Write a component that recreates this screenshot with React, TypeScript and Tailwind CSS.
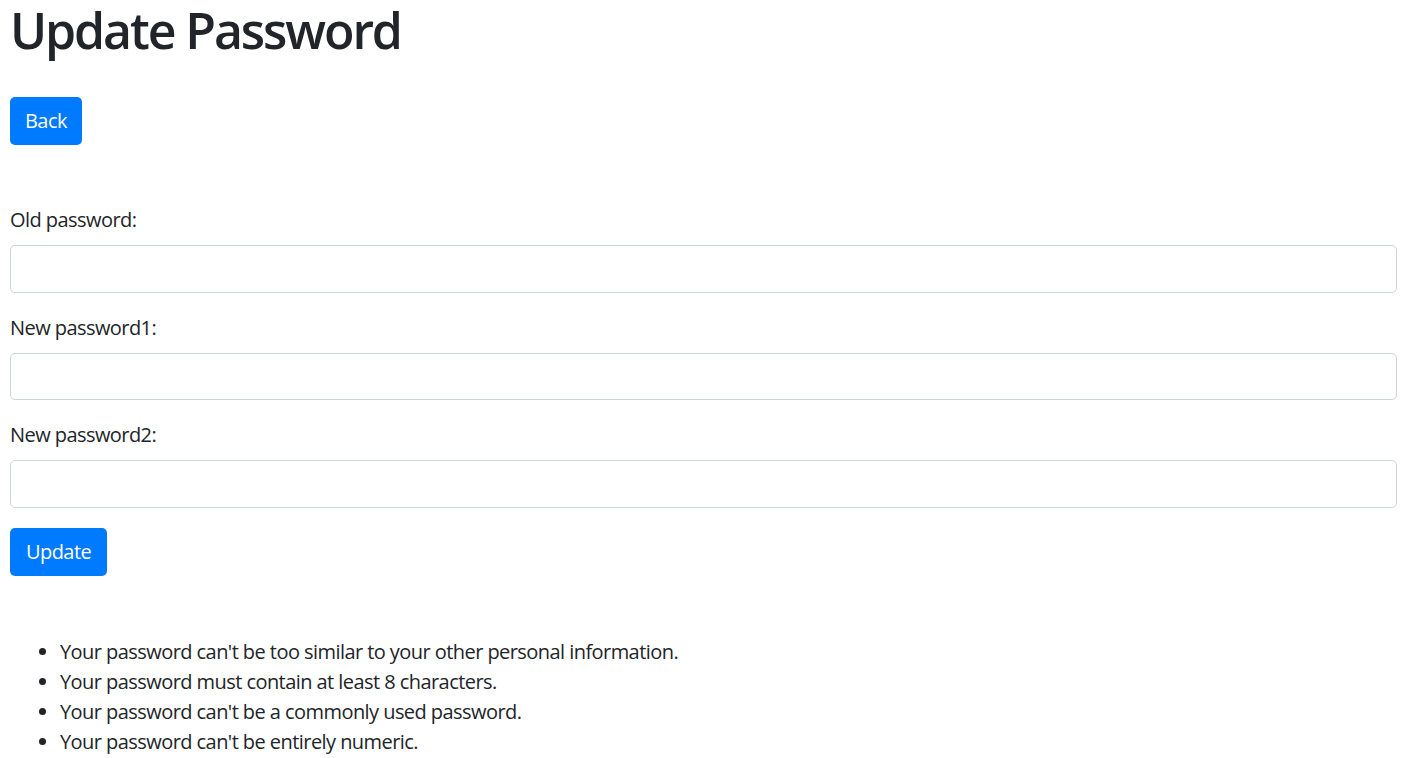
const rules = [
  "Your password can't be too similar to your other personal information.",
  "Your password must contain at least 8 characters.",
  "Your password can't be a commonly used password.",
  "Your password can't be entirely numeric.",
];

const fields = ["Old password:", "New password1:", "New password2:"];

export default function App() {
  return (
    <div
      className="min-h-screen bg-white px-[10px] text-[20px] leading-[30px] tracking-[-0.56px] text-[#212529]"
      style={{ fontFamily: '"Open Sans", "Noto Sans", sans-serif' }}
    >
      <h1 className="mb-[10px] text-[50px] font-semibold leading-[60px] tracking-[-2.1px]">Update Password</h1>

      <div className="mt-[37px]">
        <button className="h-[48px] rounded-[5px] bg-[#007bff] px-[15px] text-[20px] text-white">
          Back
        </button>
      </div>

      <form className="mt-[60px] mr-[3px]">
        {fields.map((f) => (
          <div key={f} className="mb-[20px]">
            <label className="mb-[10px] block">{f}</label>
            <input
              type="password"
              className="block h-[47.5px] w-full rounded-[5px] border border-[#ced4da] bg-white px-[15px] outline-none"
            />
          </div>
        ))}
        <button className="h-[48px] rounded-[5px] bg-[#007bff] px-[16px] text-[20px] text-white">
          Update
        </button>
      </form>

      <ul className="mt-[61px] list-disc pl-[50px]">
        {rules.map((r) => (
          <li key={r}>{r}</li>
        ))}
      </ul>
    </div>
  );
}
